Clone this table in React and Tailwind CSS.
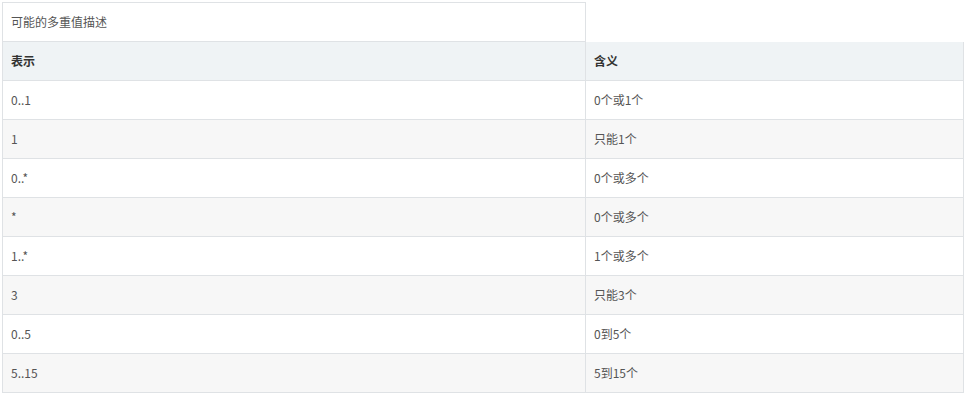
const ROWS = [
  ['0..1', '0个或1个'],
  ['1', '只能1个'],
  ['0..*', '0个或多个'],
  ['*', '0个或多个'],
  ['1..*', '1个或多个'],
  ['3', '只能3个'],
  ['0..5', '0到5个'],
  ['5..15', '5到15个'],
]

const font = "font-['Microsoft_YaHei','Noto_Sans_CJK_SC',sans-serif]"

export default function App() {
  return (
    <div className={`min-h-screen bg-white pt-[2px] pl-[2px] text-[12px] text-[#555] ${font}`}>
      {/* caption */}
      <div className="w-[584px] h-[40px] border border-[#dfe2e5] flex items-center px-2">
        可能的多重值描述
      </div>

      {/* header */}
      <div className="w-[962px] h-[39px] flex border-x border-b border-[#dfe2e5] bg-[#eff3f5] font-semibold text-[#333]">
        <div className="w-[583px] border-r border-[#dfe2e5] flex items-center px-2">表示</div>
        <div className="flex-1 flex items-center px-2">含义</div>
      </div>

      {ROWS.map(([k, v], i) => (
        <div key={i}
          className={`w-[962px] h-[39px] flex border-x border-b border-[#dfe2e5] ${i % 2 ? 'bg-[#f7f7f7]' : 'bg-white'}`}>
          <div className="w-[583px] border-r border-[#dfe2e5] flex items-center px-2">{k}</div>
          <div className="flex-1 flex items-center px-2">{v}</div>
        </div>
      ))}
    </div>
  )
}
